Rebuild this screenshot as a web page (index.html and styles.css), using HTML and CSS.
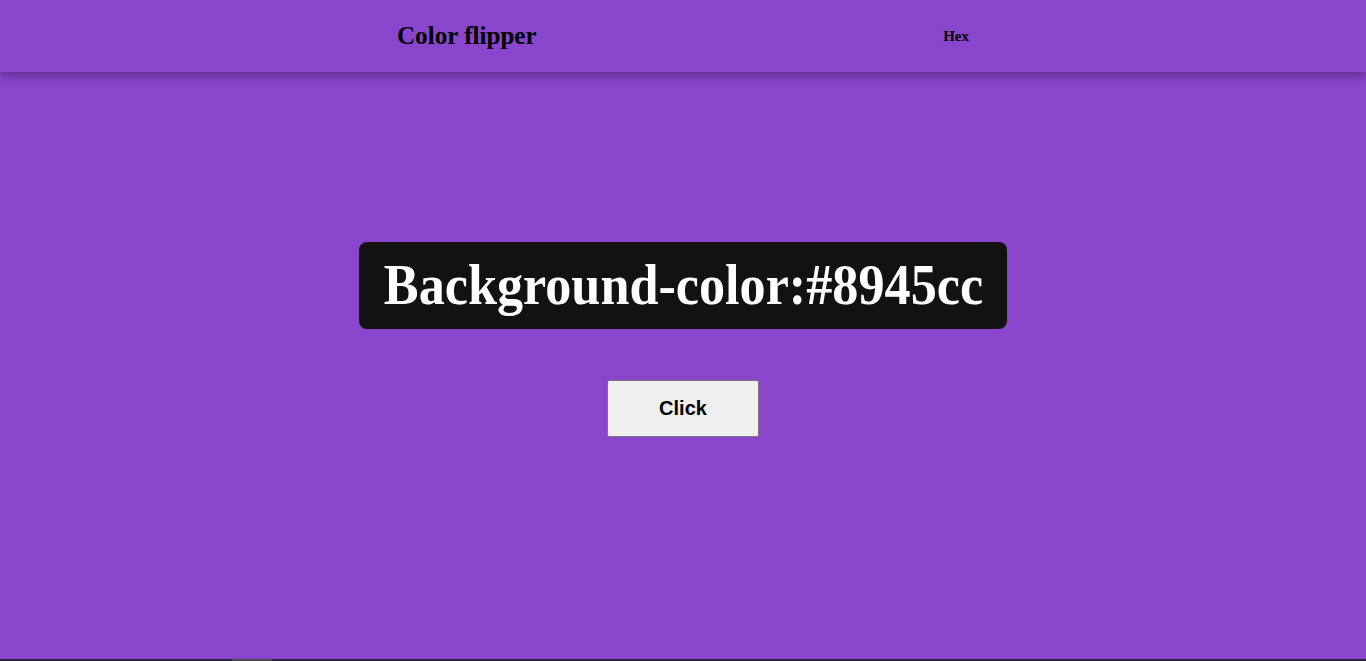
FILE: index.html
```html
<!DOCTYPE html>
<html lang="en">
<head>
<meta charset="utf-8">
<title>Color flipper</title>
<link rel="stylesheet" href="styles.css">
</head>
<body>
<div class="page">
  <nav class="nav">
    <div class="nav-center">
      <h2 class="brand"><span class="narrow-sm">Color flipper</span></h2>
      <ul class="links"><li><a href="#">Hex</a></li></ul>
    </div>
  </nav>
  <main class="main">
    <h2 class="color-box"><span class="narrow">Background-color:<span>#8945cc</span></span></h2>
    <button class="btn" type="button">Click</button>
  </main>
  <div class="bottom-strip"><span class="thumb"></span></div>
</div>
</body>
</html>
```
FILE: styles.css
```css
* { box-sizing: border-box; }
html, body { margin: 0; padding: 0; height: 100%; }
body {
  background: #8945cc;
  font-family: "Liberation Serif", "Times New Roman", serif;
  overflow: hidden;
}
.page {
  height: 661px;
  display: flex;
  flex-direction: column;
}
.nav {
  height: 72px;
  background: #8945cc;
  box-shadow: 0 4px 10px rgba(0, 0, 0, 0.32);
  display: flex;
  align-items: center;
  position: relative;
  z-index: 1;
}
.nav-center {
  width: 572px;
  margin: 0 auto;
  display: flex;
  justify-content: space-between;
  align-items: center;
}
.brand {
  margin: 0;
  font-size: 26px;
  font-weight: bold;
  color: #000;
}
.narrow-sm {
  display: inline-block;
  transform: scaleX(0.965);
  transform-origin: left center;
}
.links { list-style: none; margin: 0; padding: 0; }
.links a {
  color: #000;
  text-decoration: none;
  font-weight: bold;
  font-size: 15px;
}
.main {
  flex: 1;
  display: flex;
  flex-direction: column;
  align-items: center;
  padding-top: 170px;
}
.color-box {
  margin: 0;
  background: #121212;
  color: #fff;
  font-size: 56px;
  font-weight: bold;
  height: 87px;
  line-height: 87px;
  border-radius: 8px;
  width: 648px;
  display: flex;
  justify-content: center;
  white-space: nowrap;
}
.narrow {
  display: inline-block;
  transform: scaleX(0.932);
}
.btn {
  margin-top: 51px;
  width: 152px;
  height: 57px;
  background: #efefef;
  border: 1px solid #767676;
  border-radius: 2px;
  font-family: "Liberation Sans", Arial, sans-serif;
  font-weight: bold;
  font-size: 20px;
  color: #000;
}
.bottom-strip {
  height: 2px;
  background: #2a2333;
  display: flex;
}
.thumb {
  margin-left: 232px;
  width: 40px;
  background: #4a4a4a;
}
```
